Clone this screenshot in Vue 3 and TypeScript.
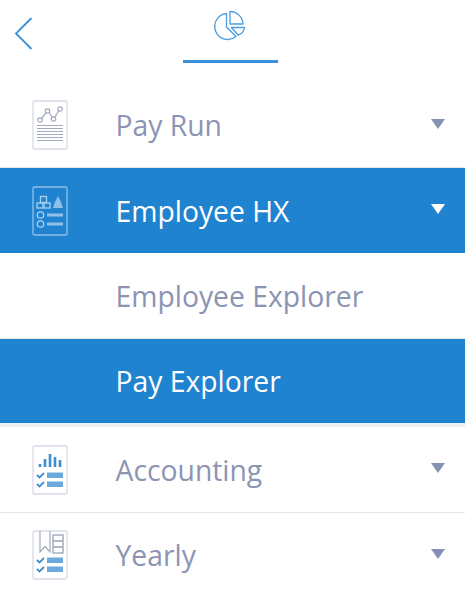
<script setup lang="ts">
interface Row { label: string; kind: string; active?: boolean; icon?: string; arrow?: boolean }
const rows: Row[] = [
  { label: 'Pay Run', kind: 'r-pay', icon: 'chart', arrow: true },
  { label: 'Employee HX', kind: 'r-hx', icon: 'people', active: true, arrow: true },
  { label: 'Employee Explorer', kind: 'r-ee' },
  { label: 'Pay Explorer', kind: 'r-pe', active: true },
  { label: 'Accounting', kind: 'r-acc', icon: 'bars', arrow: true },
  { label: 'Yearly', kind: 'r-year', icon: 'book', arrow: true },
]
</script>

<template>
  <div class="page">
    <header class="head">
      <svg class="back" width="24" height="36" viewBox="0 0 24 36" fill="none">
        <path d="M18.5 2 L3 17.5 L18.5 33" stroke="#3b8fd6" stroke-width="1.8" />
      </svg>
      <div class="tab">
        <svg width="34" height="34" viewBox="0 0 34 34" fill="none" stroke="#4a9de0" stroke-width="1.3" stroke-linejoin="round">
          <path d="M14.5 3.5 A13 13 0 1 0 24 26.5 L14.5 17 Z" />
          <path d="M18 1.5 A13 13 0 0 1 31 14 L18 14 Z" />
          <path d="M19.5 17.5 L32.5 17.5 A9 9 0 0 1 26 25 Z" />
        </svg>
      </div>
    </header>
    <div v-for="r in rows" :key="r.label" class="row" :class="[r.kind, { active: r.active }]">
      <span class="slot">
        <svg v-if="r.icon" class="doc" width="36" height="50" viewBox="0 0 36 50" fill="none">
          <rect x="1" y="1" width="34" height="48" rx="1.5" class="frame" />
          <template v-if="r.icon === 'chart'">
            <path d="M9 19 L14 13 M17 12 L20 17 M23 17 L27 10" class="mid" />
            <circle cx="8" cy="20" r="2.2" class="mid" />
            <circle cx="15.5" cy="11" r="2.2" class="mid" />
            <circle cx="21.5" cy="19" r="2.2" class="mid" />
            <circle cx="28" cy="9" r="2.2" class="mid" />
            <path d="M5 25.5H31M5 28.5H31M5 31.5H31M5 34.5H31M5 37.5H31M5 40.5H31" class="mid" />
          </template>
          <template v-else-if="r.icon === 'people'">
            <rect x="5" y="17" width="6" height="5" class="line" />
            <rect x="12" y="17" width="6" height="5" class="line" />
            <rect x="8.5" y="10.5" width="6" height="6" class="line" />
            <path d="M21 22 L23 16 L26 10 L29 16 L31 22 Z" class="soft" />
            <circle cx="8.5" cy="29" r="3.2" class="line" />
            <circle cx="8.5" cy="38" r="3.2" class="line" />
            <path d="M15 27.5H31V30.5H15Z M15 36.5H31V39.5H15Z" class="soft" />
          </template>
          <template v-else-if="r.icon === 'bars'">
            <path d="M8 19V22M13 14V22M18 9V22M23 12V22M28 15V22" class="blue bar" />
            <path d="M5 30 L7.5 32.5 L12 28 M5 39 L7.5 41.5 L12 37" class="blue" />
            <path d="M15 27.5H31V33H15Z M15 36.5H31V42H15Z" class="fill" />
          </template>
          <template v-else>
            <path d="M8 1 V22 L13 16.5 L18 22 V1" class="mid" />
            <rect x="21" y="5" width="10" height="18" class="dark" />
            <path d="M21 11H31M21 17H31" class="dark" />
            <path d="M5 30 L7.5 32.5 L12 28 M5 39 L7.5 41.5 L12 37" class="blue" />
            <path d="M15 27.5H31V33H15Z M15 36.5H31V42H15Z" class="fill" />
          </template>
        </svg>
      </span>
      <span class="label">{{ r.label }}</span>
      <span v-if="r.arrow" class="arrow"></span>
    </div>
  </div>
</template>

<style>
html, body { margin: 0; background: #fff; }
</style>

<style scoped>
.page {
  width: 465px;
  height: 597px;
  overflow: hidden;
  font-family: "Open Sans", sans-serif;
  display: flex;
  flex-direction: column;
}
.head {
  height: 83px;
  flex: none;
  display: flex;
  align-items: flex-start;
  padding-left: 13px;
  gap: 146px;
  box-sizing: border-box;
}
.back { margin-top: 16px; }
.tab {
  width: 95px;
  height: 63px;
  box-sizing: border-box;
  border-bottom: 3px solid #3a90da;
  display: flex;
  justify-content: center;
  padding-top: 10px;
  padding-right: 3px;
}
.row {
  height: 85px;
  flex: none;
  display: flex;
  align-items: center;
  box-sizing: border-box;
  color: #8b94b3;
  font-size: 28.3px;
  background: #fff;
}
.row.active { background: #2083d0; color: #fff; }
.r-pay { border-bottom: 1px solid #e4e6ea; }
.r-ee { height: 86px; border-bottom: 1px solid #e6e8ec; }
.r-pe { height: 84px; }
.r-acc { height: 90px; border-top: 4px solid #eef0f2; border-bottom: 1px solid #e4e6ea; }
.r-year { height: 84px; }
.slot {
  width: 115.5px;
  flex: none;
  display: flex;
  padding-left: 32px;
  box-sizing: border-box;
}
.label { flex: 1; }
.arrow {
  width: 0;
  height: 0;
  margin-right: 20px;
  margin-bottom: 3px;
  border-left: 7.5px solid transparent;
  border-right: 7.5px solid transparent;
  border-top: 10px solid #8591b3;
}
.active .arrow { border-top-color: #fff; }
.doc { display: block; filter: blur(0.4px); }
.frame { stroke: #d6dae6; stroke-width: 1.3; }
.active .frame { stroke: #8fc0e8; }
.mid { stroke: #a3a9c0; stroke-width: 1.2; }
.line { stroke: #a9d0ef; stroke-width: 1.3; }
.soft { fill: #8fc0e8; }
.blue { stroke: #3d8fd2; stroke-width: 1.8; }
.bar { stroke-width: 2.6; }
.fill { fill: #6ea9de; }
.dark { stroke: #9aa2b8; stroke-width: 1.3; }
</style>
